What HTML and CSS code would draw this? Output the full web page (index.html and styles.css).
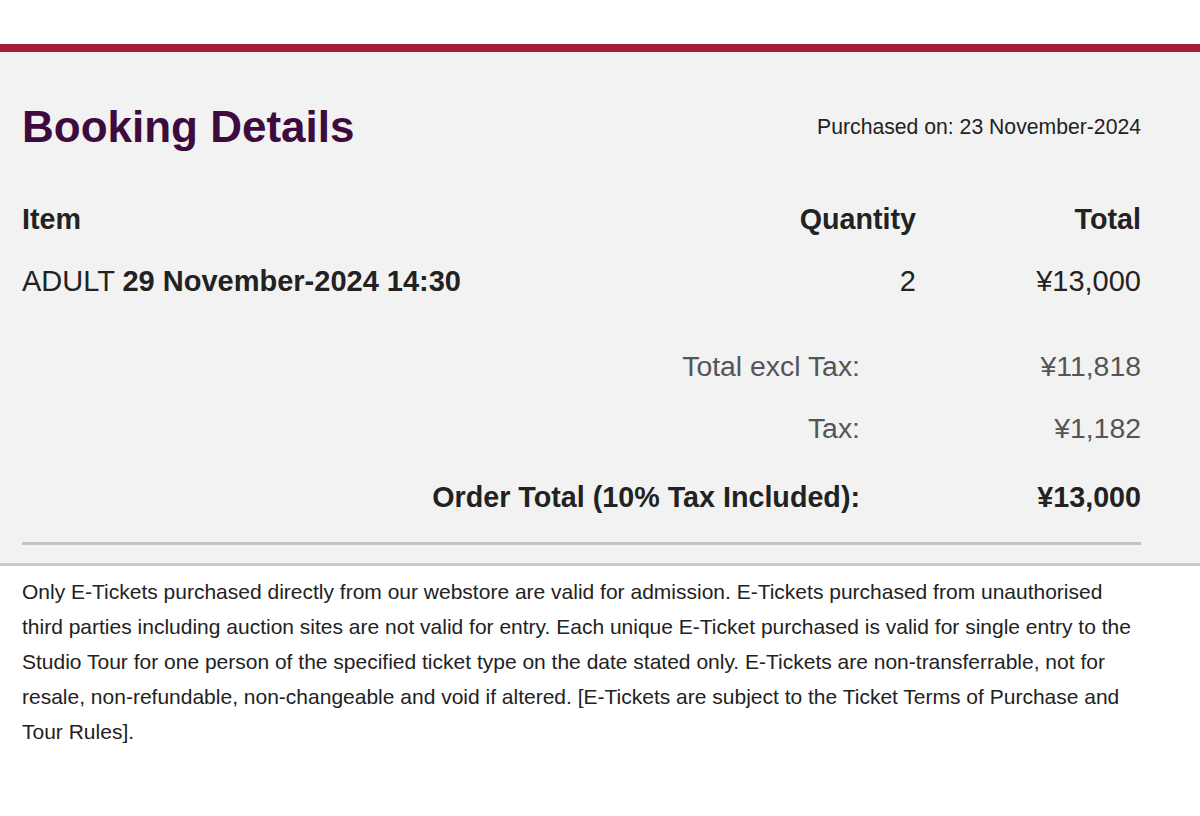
FILE: index.html
```html
<!DOCTYPE html>
<html lang="en">
<head>
<meta charset="utf-8">
<title>Booking Details</title>
<link rel="stylesheet" href="styles.css">
</head>
<body>
<div class="page">
  <section class="card">
    <div class="title-row">
      <h1 class="title">Booking Details</h1>
      <div class="purchased">Purchased on: 23 November-2024</div>
    </div>
    <div class="items">
      <div class="item-row head">
        <div class="col-item">Item</div>
        <div class="col-qty">Quantity</div>
        <div class="col-total">Total</div>
      </div>
      <div class="item-row line">
        <div class="col-item">ADULT <strong>29 November-2024 14:30</strong></div>
        <div class="col-qty">2</div>
        <div class="col-total">¥13,000</div>
      </div>
    </div>
    <div class="summary">
      <div class="sum-row muted">
        <div class="sum-label">Total excl Tax:</div>
        <div class="sum-value">¥11,818</div>
      </div>
      <div class="sum-row muted">
        <div class="sum-label">Tax:</div>
        <div class="sum-value">¥1,182</div>
      </div>
      <div class="sum-row grand">
        <div class="sum-label">Order Total (10% Tax Included):</div>
        <div class="sum-value">¥13,000</div>
      </div>
    </div>
    <div class="rule"></div>
  </section>
  <p class="terms">Only E-Tickets purchased directly from our webstore are valid for admission. E-Tickets purchased from unauthorised third parties including auction sites are not valid for entry. Each unique E-Ticket purchased is valid for single entry to the Studio Tour for one person of the specified ticket type on the date stated only. E-Tickets are non-transferrable, not for resale, non-refundable, non-changeable and void if altered. [E-Tickets are subject to the Ticket Terms of Purchase and Tour Rules].</p>
</div>
</body>
</html>
```

FILE: styles.css
```css
* { box-sizing: border-box; }

html, body {
  margin: 0;
  padding: 0;
  background: #ffffff;
}

body {
  font-family: "Liberation Sans", Arial, sans-serif;
  color: #222222;
}

.page {
  padding-top: 44px;
}

.card {
  background: #f2f2f2;
  border-top: 8px solid #a31d35;
  border-bottom: 3px solid #c9c9c9;
  padding: 50px 59px 18px 22px;
}

.title-row {
  display: flex;
  justify-content: space-between;
  align-items: center;
  height: 50px;
}

.title {
  margin: 0;
  font-size: 44px;
  line-height: 50px;
  font-weight: 700;
  color: #3d0b3e;
}

.purchased {
  font-size: 21.2px;
  line-height: 26px;
  color: #222222;
}

.items {
  margin-top: 47px;
  display: flex;
  flex-direction: column;
  gap: 22px;
}

.item-row {
  display: flex;
  align-items: center;
  height: 40px;
  font-size: 28.7px;
  line-height: 40px;
}

.item-row.head {
  font-weight: 700;
}

.item-row.line {
  font-size: 29px;
}

.col-item {
  flex: 1;
}

.col-qty {
  text-align: right;
}

.col-total {
  width: 225px;
  text-align: right;
}

.summary {
  margin-top: 45px;
  display: flex;
  flex-direction: column;
  gap: 22px;
}

.sum-row {
  display: flex;
  justify-content: flex-end;
  height: 40px;
  font-size: 28.4px;
  line-height: 40px;
}

.sum-row.muted {
  color: #555555;
}

.sum-row.grand {
  margin-top: 7px;
  font-size: 28.7px;
  font-weight: 700;
  color: #222222;
}

.sum-value {
  width: 281px;
  text-align: right;
}

.rule {
  margin-top: 25px;
  height: 3px;
  background: #c4c4c4;
}

.terms {
  margin: 0;
  padding: 8px 59px 0 22px;
  font-size: 21px;
  line-height: 35px;
  color: #222222;
}
```
